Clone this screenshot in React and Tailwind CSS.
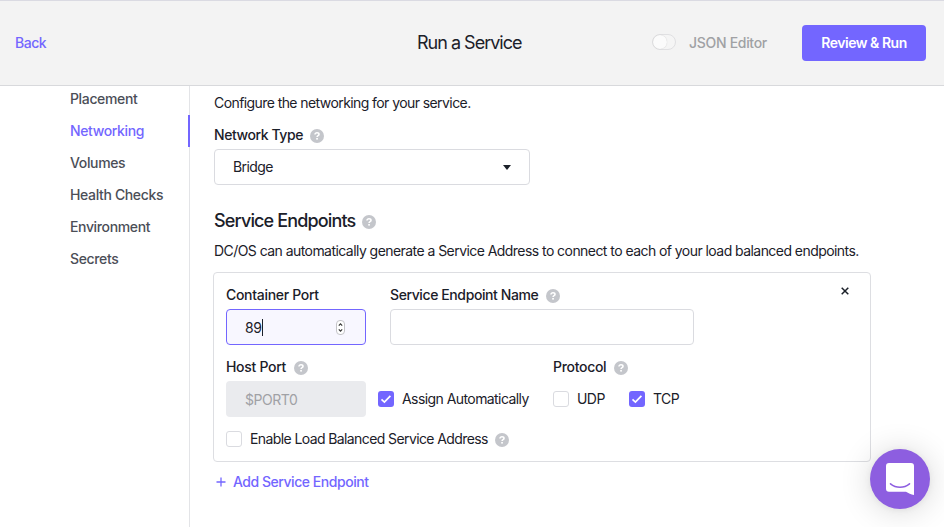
import React from "react";

function Help({ className = "" }) {
  return (
    <svg className={`block h-3.5 w-3.5 shrink-0 ${className}`} viewBox="0 0 14 14" fill="none">
      <circle cx="7" cy="7" r="7" fill="#c4c6cb" />
      <path d="M5 5.600C5 4.400 5.900 3.800 7 3.800s2 .7 2 1.600c0 1.300-1.900 1.200-1.900 2.500" stroke="#fff" strokeWidth="1.6" />
      <rect x="6.200" y="9" width="1.700" height="1.600" fill="#fff" />
    </svg>
  );
}

function Checkbox({ checked }) {
  return (
    <span
      className={`flex h-4 w-4 shrink-0 items-center justify-center rounded-[3px] ${
        checked ? "bg-[#7366ff]" : "border border-[#dadbe0] bg-white"
      }`}
    >
      {checked && (
        <svg className="block h-4 w-4" viewBox="0 0 16 16" fill="none">
          <path d="M3.5 8.3 6.4 11 12.4 4.8" stroke="#fff" strokeWidth="1.7" />
        </svg>
      )}
    </span>
  );
}

const navItems = ["Placement", "Networking", "Volumes", "Health Checks", "Environment", "Secrets"];

function Header() {
  return (
    <header className="flex h-[86px] shrink-0 items-center border-y border-t-[#dadae2] border-b-[#d8d9dc] bg-[#f3f3f3]">
      <div className="w-[418px] pl-[15px] font-[550] tracking-[-0.45px] text-[#7366ff]">Back</div>
      <h1 className="-ml-px w-[235px] text-[18px] leading-6 tracking-[-1px]">Run a Service</h1>
      <span className="-mt-0.5 flex h-4 w-6 items-center rounded-full border border-[#e0e0e2] bg-[#f5f5f5]">
        <span className="h-3.5 w-3.5 rounded-full bg-[#fbfbfb] shadow-[0_0_1px_rgba(0,0,0,0.2)]" />
      </span>
      <span className="ml-3 w-[114px] pl-px font-medium tracking-[-0.3px] text-[#a0a1a4]">JSON Editor</span>
      <button className="h-9 w-[124px] rounded bg-[#7366ff] font-semibold tracking-[-0.48px] text-white">Review &amp; Run</button>
    </header>
  );
}

function Sidebar() {
  return (
    <nav className="w-[190px] shrink-0 border-r border-[#e3e4e7]">
      <ul className="-mt-[3px]">
        {navItems.map((item) => (
          <li
            key={item}
            className={`-mr-px flex h-8 items-center pl-[70px] font-[550] tracking-[-0.36px] ${
              item === "Networking" ? "border-r-2 border-[#7366ff] text-[#7366ff]" : "text-[#4b4e57]"
            }`}
          >
            {item}
          </li>
        ))}
      </ul>
    </nav>
  );
}

function EndpointCard() {
  return (
    <section className="-ml-px mt-[11px] flex h-[190px] w-[658px] flex-col rounded border border-[#dddee2] pl-3">
      <div className="mt-3 flex h-[60px]">
        <div className="w-[164px]">
          <label className="flex h-5 items-center font-[550] tracking-[-0.3px]">Container Port</label>
          <div className="mt-1 flex h-9 w-[140px] items-center rounded border border-[#7366ff] bg-[#f8f7ff] pl-[18px] pr-5">
            <span className="pt-0.5 tracking-[-0.3px]">89</span>
            <span className="h-[17px] w-px bg-[#1b2029]" />
            <svg className="ml-auto block h-[15px] w-[9px]" viewBox="0 0 9 15" fill="none">
              <rect x=".5" y=".5" width="8" height="14" rx="3.5" fill="#fff" stroke="#c3c3c7" />
              <path d="M2.8 5.7 4.5 3.9l1.7 1.8M2.8 9.3l1.7 1.8 1.7-1.8" stroke="#333" strokeWidth="1.1" />
            </svg>
          </div>
        </div>
        <div className="w-[451px]">
          <label className="flex h-5 items-center font-[550] tracking-[-0.4px]">
            <span className="w-[156px] whitespace-nowrap">Service Endpoint Name</span>
            <Help className="mt-0.5" />
          </label>
          <div className="mt-1 h-9 w-[304px] rounded border border-[#dadbe0]" />
        </div>
        <svg className="mt-0.5 block h-2 w-2" viewBox="0 0 8 8" fill="none">
          <path d="m.7.7 6.600 6.600M7.300.7.7 7.300" stroke="#1b2029" strokeWidth="1.5" />
        </svg>
      </div>
      <div className="mt-3 flex h-5 items-center font-[550] tracking-[-0.3px]">
        <span className="w-[68px]">Host Port</span>
        <Help className="mt-0.5" />
        <span className="ml-[245px] w-[61px]">Protocol</span>
        <Help className="mt-0.5" />
      </div>
      <div className="mt-1 flex h-9 items-center tracking-[-0.57px]">
        <div className="mr-3 flex h-9 w-[140px] items-center rounded bg-[#eaebee] pl-[19px] pt-0.5 tracking-[-0.45px] text-[#a0a1a5]">$PORT0</div>
        <Checkbox checked />
        <span className="ml-2 w-[151px]">Assign Automatically</span>
        <Checkbox />
        <span className="ml-2 w-[52px]">UDP</span>
        <Checkbox checked />
        <span className="ml-2">TCP</span>
      </div>
      <div className="mt-3 flex h-5 items-center tracking-[-0.6px]">
        <Checkbox />
        <span className="ml-2 w-[245px] whitespace-nowrap">Enable Load Balanced Service Address</span>
        <Help className="mt-0.5" />
      </div>
    </section>
  );
}

function Main() {
  return (
    <main className="flex-1 pl-6 pt-[7px]">
      <p className="h-5 tracking-[-0.58px]">Configure the networking for your service.</p>
      <div className="mt-3 flex h-5 items-center">
        <span className="w-24 whitespace-nowrap font-[550] tracking-[-0.42px]">Network Type</span>
        <Help className="mt-0.5" />
      </div>
      <div className="mt-1 flex h-9 w-[316px] items-center justify-between rounded border border-[#dadbe0] pl-[18px] pr-[18px]">
        <span className="tracking-[-0.6px]">Bridge</span>
        <svg className="block h-[5px] w-2" viewBox="0 0 8 5">
          <path d="M0 0h8L4 5z" fill="#1b2029" />
        </svg>
      </div>
      <div className="mt-6 flex h-6 items-center">
        <h2 className="w-[148px] whitespace-nowrap text-[18px] font-medium leading-6 tracking-[-0.85px]">Service Endpoints</h2>
        <Help className="mt-0.5" />
      </div>
      <p className="mt-2 h-5 whitespace-nowrap tracking-[-0.555px]">
        DC/OS can automatically generate a Service Address to connect to each of your load balanced endpoints.
      </p>
      <EndpointCard />
      <a className="mt-2.5 flex h-5 items-center pl-0.5 font-[550] tracking-[-0.46px] text-[#7366ff]">
        <svg className="mr-[7px] block h-2.5 w-2.5" viewBox="0 0 10 10" fill="none">
          <path d="M5 .5v9M.5 5h9" stroke="#7366ff" strokeWidth="1.300" />
        </svg>
        Add Service Endpoint
      </a>
    </main>
  );
}

export default function App() {
  return (
    <div className="relative flex h-[527px] w-[944px] flex-col overflow-hidden bg-white font-['Inter','Liberation_Sans',sans-serif] text-[14px] leading-5 text-[#1b2029]">
      <Header />
      <div className="flex min-h-0 flex-1 overflow-hidden">
        <Sidebar />
        <Main />
      </div>
      <button className="absolute bottom-[18px] right-3.5 flex h-[60px] w-[60px] items-center justify-center rounded-full bg-[#8d5ee0] shadow-[0_1px_6px_rgba(0,0,0,0.06),0_2px_32px_rgba(0,0,0,0.16)]">
        <svg className="block h-8 w-7" viewBox="0 0 28 32" fill="none">
          <path d="M3 0h22a3 3 0 0 1 3 3v29c-3-.5-5.500-1.700-8-3.200H3a3 3 0 0 1-3-3V3a3 3 0 0 1 3-3z" fill="#fff" />
          <path d="M4.500 20.800c5.500 4.500 13.500 4.500 19 0" stroke="#8d5ee0" strokeWidth="1.600" strokeLinecap="round" />
        </svg>
      </button>
    </div>
  );
}
